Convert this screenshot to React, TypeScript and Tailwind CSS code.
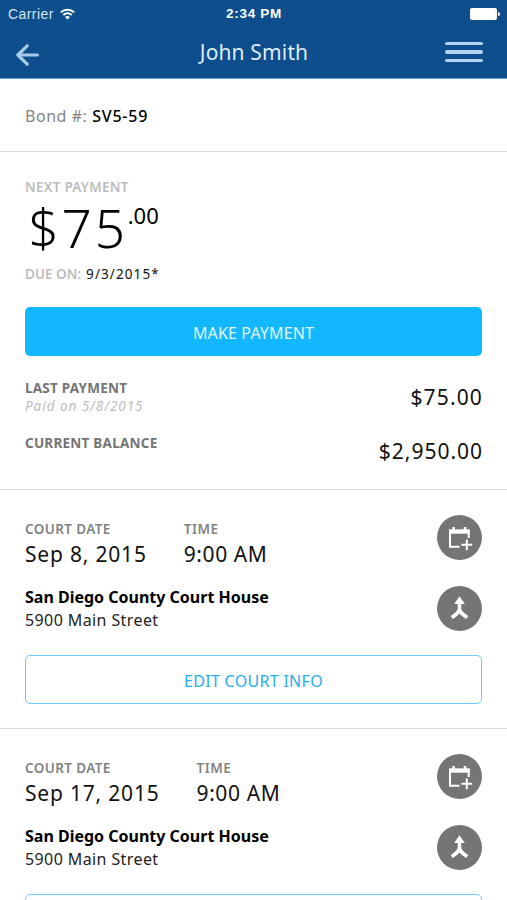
import type { ReactNode } from "react";

function StatusBar() {
  return (
    <div className="grid h-[27px] grid-cols-3 items-center pl-2 pr-[7px] font-['Liberation_Sans',sans-serif] text-[14px] text-white">
      <div className="flex items-center gap-[6px] text-[#d3e4f5]">
        <span className="pt-px tracking-[0.42px]">Carrier</span>
        <svg width="15" height="12" viewBox="0 0 15 12" fill="none" stroke="white" strokeWidth="2">
          <path d="M0.8 4.4a9.5 9.5 0 0 1 13.4 0" />
          <path d="M3.3 7a6 6 0 0 1 8.4 0" />
          <path d="M7.5 11.6 5 9.1a3.6 3.6 0 0 1 5 0z" fill="white" stroke="none" />
        </svg>
      </div>
      <span className="pt-px text-center text-[13.5px] font-bold tracking-[0.7px]">2:34 PM</span>
      <div className="flex items-center justify-end gap-px">
        <div className="h-3 w-[27px] rounded-[2px] bg-white" />
        <div className="h-1 w-[2px] rounded-r-full bg-white" />
      </div>
    </div>
  );
}

function NavBar() {
  return (
    <div className="flex h-[51px] items-center justify-between pl-[15px] pr-6">
      <svg className="mt-[4px]" width="48" height="22" viewBox="0 0 48 22" fill="none" stroke="#a9c9ea" strokeWidth="3.2" strokeLinecap="round" strokeLinejoin="round">
        <path d="M12.2 1.8 2.8 11l9.4 9.2M3.2 11h19.2" />
      </svg>
      <h1 className="text-[21px] leading-[51px] tracking-[0.15px] text-[#dcecfb]">John Smith</h1>
      <div className="flex flex-col gap-[5px] pb-px">
        <div className="h-[3.6px] w-[38px] rounded-full bg-[#b5d3f1]" />
        <div className="h-[3.6px] w-[38px] rounded-full bg-[#b5d3f1]" />
        <div className="h-[3.6px] w-[38px] rounded-full bg-[#b5d3f1]" />
      </div>
    </div>
  );
}

function RoundButton({ children }: { children: ReactNode }) {
  return (
    <button className="block size-[45px] rounded-full bg-[#757575]">
      <svg width="45" height="45" viewBox="0 0 45 45" fill="none" stroke="white">
        {children}
      </svg>
    </button>
  );
}

function CourtCard({ date, time }: { date: string; time: string }) {
  return (
    <section className="h-[239px] border-b-[1.5px] border-[#dcdcdc] px-[25px] pt-[25px]">
      <div className="flex h-[140px] justify-between">
        <div className="pt-px">
          <div className="flex gap-[37px]">
            <div>
              <div className="text-[13.5px] font-semibold leading-[26px] tracking-[0.38px] text-[#828282]">COURT DATE</div>
              <div className="text-[21px] leading-[25px] tracking-[0.8px] text-[#111]">{date}</div>
            </div>
            <div>
              <div className="text-[13.5px] font-semibold leading-[26px] tracking-[0.5px] text-[#828282]">TIME</div>
              <div className="text-[21px] leading-[25px] tracking-[0.6px] text-[#111]">{time}</div>
            </div>
          </div>
          <div className="mt-[19px] text-[16px] font-bold leading-[23px] text-black">San Diego County Court House</div>
          <div className="text-[16px] leading-[23px] tracking-[0.4px] text-[#222]">5900 Main Street</div>
        </div>
        <div className="flex flex-col gap-[26px]">
          <RoundButton>
            <path d="M22.5 31.7H13V15.5h18.7V23" strokeWidth="2" />
            <path d="M12 16.7h20.7" strokeWidth="4" />
            <path d="M16.6 12v4M28 12v4" strokeWidth="2.6" />
            <path d="M29.8 24.4v10.8M24.4 29.8h10.8" strokeWidth="2" />
          </RoundButton>
          <RoundButton>
            <path d="M22.5 10.2 27.8 18H17.2z" fill="white" stroke="none" />
            <path d="M22.5 16v6.5c0 4-3.5 6-7.8 9M22.5 22.5c0 4 3.5 6 7.8 9" strokeWidth="3.6" />
          </RoundButton>
        </div>
      </div>
      <button className="block h-[49px] w-full rounded-[5px] border border-solid border-[#6fcdfb] pt-[2px] text-[16px] tracking-[0.3px] text-[#26adee]">
        EDIT COURT INFO
      </button>
    </section>
  );
}

export default function App() {
  return (
    <div className="h-[900px] w-full overflow-hidden bg-white font-['Noto_Sans','Open_Sans',sans-serif]">
      <header className="h-[79px] border-b border-[#6d9ccb] bg-[#0e4e8c]">
        <StatusBar />
        <NavBar />
      </header>
      <section className="h-[73px] border-b-[1.5px] border-[#dcdcdc] px-[25px] text-[16px] leading-[74px]">
        <span className="tracking-[0.55px] text-[#858585]">Bond #: </span>
        <span className="font-medium tracking-[0.8px] text-black">SV5-59</span>
      </section>
      <section className="h-[338px] border-b-[1.5px] border-[#dcdcdc] px-[25px] pt-[25px]">
        <div className="text-[13.5px] font-semibold leading-[21px] tracking-[0.27px] text-[#bdbdbd]">NEXT PAYMENT</div>
        <div className="flex h-[66px] items-start pl-[3.5px] text-black">
          <span className="text-[53px] font-light leading-[59px] tracking-[2.8px]">$75</span>
          <span className="text-[22px] leading-[35px]">.00</span>
        </div>
        <div className="flex gap-[5px] text-[13.5px] leading-5">
          <span className="font-semibold text-[#bdbdbd]">DUE ON:</span>
          <span className="tracking-[1.1px] text-[#111]">9/3/2015*</span>
        </div>
        <button className="mt-[23px] block h-[49px] w-full rounded-[5px] bg-[#12b7ff] pt-[2px] text-[16px] tracking-[0.15px] text-[#e0f7ff]">
          MAKE PAYMENT
        </button>
        <div className="mt-[23px] flex justify-between">
          <div className="text-[13.5px] leading-[18px]">
            <div className="font-bold tracking-[0.24px] text-[#757575]">LAST PAYMENT</div>
            <div className="italic tracking-[0.95px] text-[#bdbdbd]">Paid on 5/8/2015</div>
          </div>
          <div className="-mr-px text-[21px] leading-9 tracking-[1.15px] text-[#111]">$75.00</div>
        </div>
        <div className="mt-[18px] flex justify-between">
          <div className="text-[13.5px] font-bold leading-[20px] tracking-[0.24px] text-[#757575]">CURRENT BALANCE</div>
          <div className="-mr-px text-[21px] leading-9 tracking-[0.98px] text-[#111]">$2,950.00</div>
        </div>
      </section>
      <CourtCard date="Sep 8, 2015" time="9:00 AM" />
      <CourtCard date="Sep 17, 2015" time="9:00 AM" />
    </div>
  );
}
